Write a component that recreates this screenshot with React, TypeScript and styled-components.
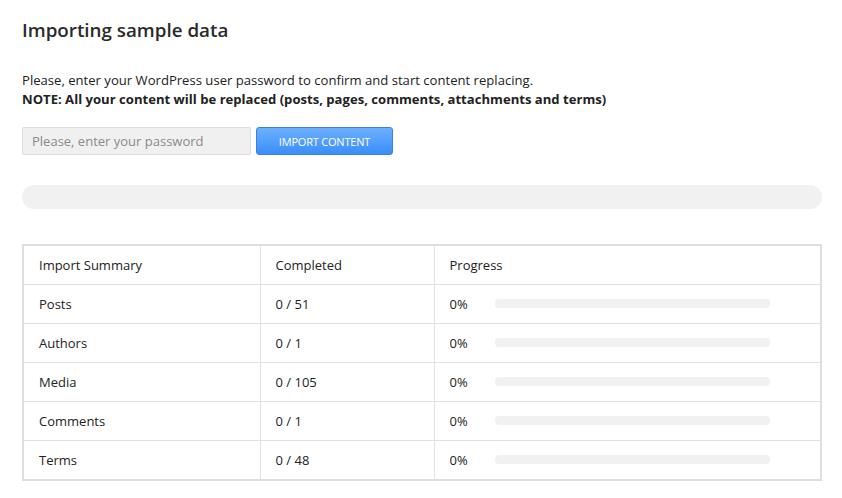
import React from "react";
import styled, { createGlobalStyle } from "styled-components";

const Global = createGlobalStyle`
  html, body { margin: 0; padding: 0; background: #fff; }
  body { font-family: "Open Sans", "Noto Sans", sans-serif; color: #222; }
  * { box-sizing: border-box; }
`;

const Page = styled.div`
  padding: 17px 20px 0 22px;
  width: 842px;
`;

const Title = styled.h1`
  margin: 0;
  font-size: 18.8px;
  font-weight: 600;
  line-height: 26px;
  color: #2a2a2a;
`;

const Intro = styled.p`
  margin: 28px 0 0;
  font-size: 13.1px;
  line-height: 19px;
  color: #222;
`;

const Note = styled.strong`
  font-weight: 700;
`;

const Form = styled.div`
  display: flex;
  gap: 5px;
  margin-top: 18px;
`;

const PasswordInput = styled.input`
  width: 229px;
  height: 28px;
  background: #f0f0f0;
  border: 1px solid #dcdcdc;
  border-radius: 2px;
  padding: 0 9px;
  font-family: "Open Sans", sans-serif;
  font-size: 13px;
  color: #333;
  outline: none;
  &::placeholder { color: #8a8a8a; }
`;

const ImportButton = styled.button`
  width: 137px;
  height: 28px;
  border: 1px solid #3b82d6;
  border-radius: 3px;
  background: linear-gradient(#6cb0ff, #3a8ef8);
  color: #fff;
  font-family: "Open Sans", sans-serif;
  font-size: 11px;
  letter-spacing: -0.2px;
  text-transform: uppercase;
  cursor: pointer;
`;

const MainBar = styled.div`
  margin-top: 30px;
  height: 24px;
  border-radius: 12px;
  background: #f1f1f1;
`;

const Table = styled.table`
  margin-top: 35px;
  width: 800px;
  border-collapse: collapse;
  border: 2px solid #dedede;
  font-size: 13px;
  color: #222;
`;

const Cell = styled.td<{ $w?: number }>`
  height: 39px;
  padding: 0 15px;
  border: 1px solid #e1e1e1;
  width: ${(p) => (p.$w ? `${p.$w}px` : "auto")};
  font-weight: 400;
  text-align: left;
  vertical-align: middle;
`;

const BodyRow = styled.tr`
  & > td { height: 39px; }
  &:last-child > td { height: 40px; }
`;

const ProgressWrap = styled.div`
  display: flex;
  align-items: center;
`;

const Pct = styled.span`
  width: 45px;
`;

const RowBar = styled.div`
  width: 275px;
  height: 9px;
  border-radius: 4px;
  background: #f1f1f1;
`;

const rows = [
  ["Posts", "0 / 51"],
  ["Authors", "0 / 1"],
  ["Media", "0 / 105"],
  ["Comments", "0 / 1"],
  ["Terms", "0 / 48"],
];

export default function App() {
  return (
    <>
      <Global />
      <Page>
        <Title>Importing sample data</Title>
        <Intro>
          Please, enter your WordPress user password to confirm and start content replacing.
          <br />
          <Note>NOTE: All your content will be replaced (posts, pages, comments, attachments and terms)</Note>
        </Intro>
        <Form>
          <PasswordInput type="password" placeholder="Please, enter your password" />
          <ImportButton>Import content</ImportButton>
        </Form>
        <MainBar />
        <Table>
          <thead>
            <tr>
              <Cell as="th" $w={237}>Import Summary</Cell>
              <Cell as="th" $w={174}>Completed</Cell>
              <Cell as="th">Progress</Cell>
            </tr>
          </thead>
          <tbody>
            {rows.map(([name, done]) => (
              <BodyRow key={name}>
                <Cell>{name}</Cell>
                <Cell>{done}</Cell>
                <Cell>
                  <ProgressWrap>
                    <Pct>0%</Pct>
                    <RowBar />
                  </ProgressWrap>
                </Cell>
              </BodyRow>
            ))}
          </tbody>
        </Table>
      </Page>
    </>
  );
}
